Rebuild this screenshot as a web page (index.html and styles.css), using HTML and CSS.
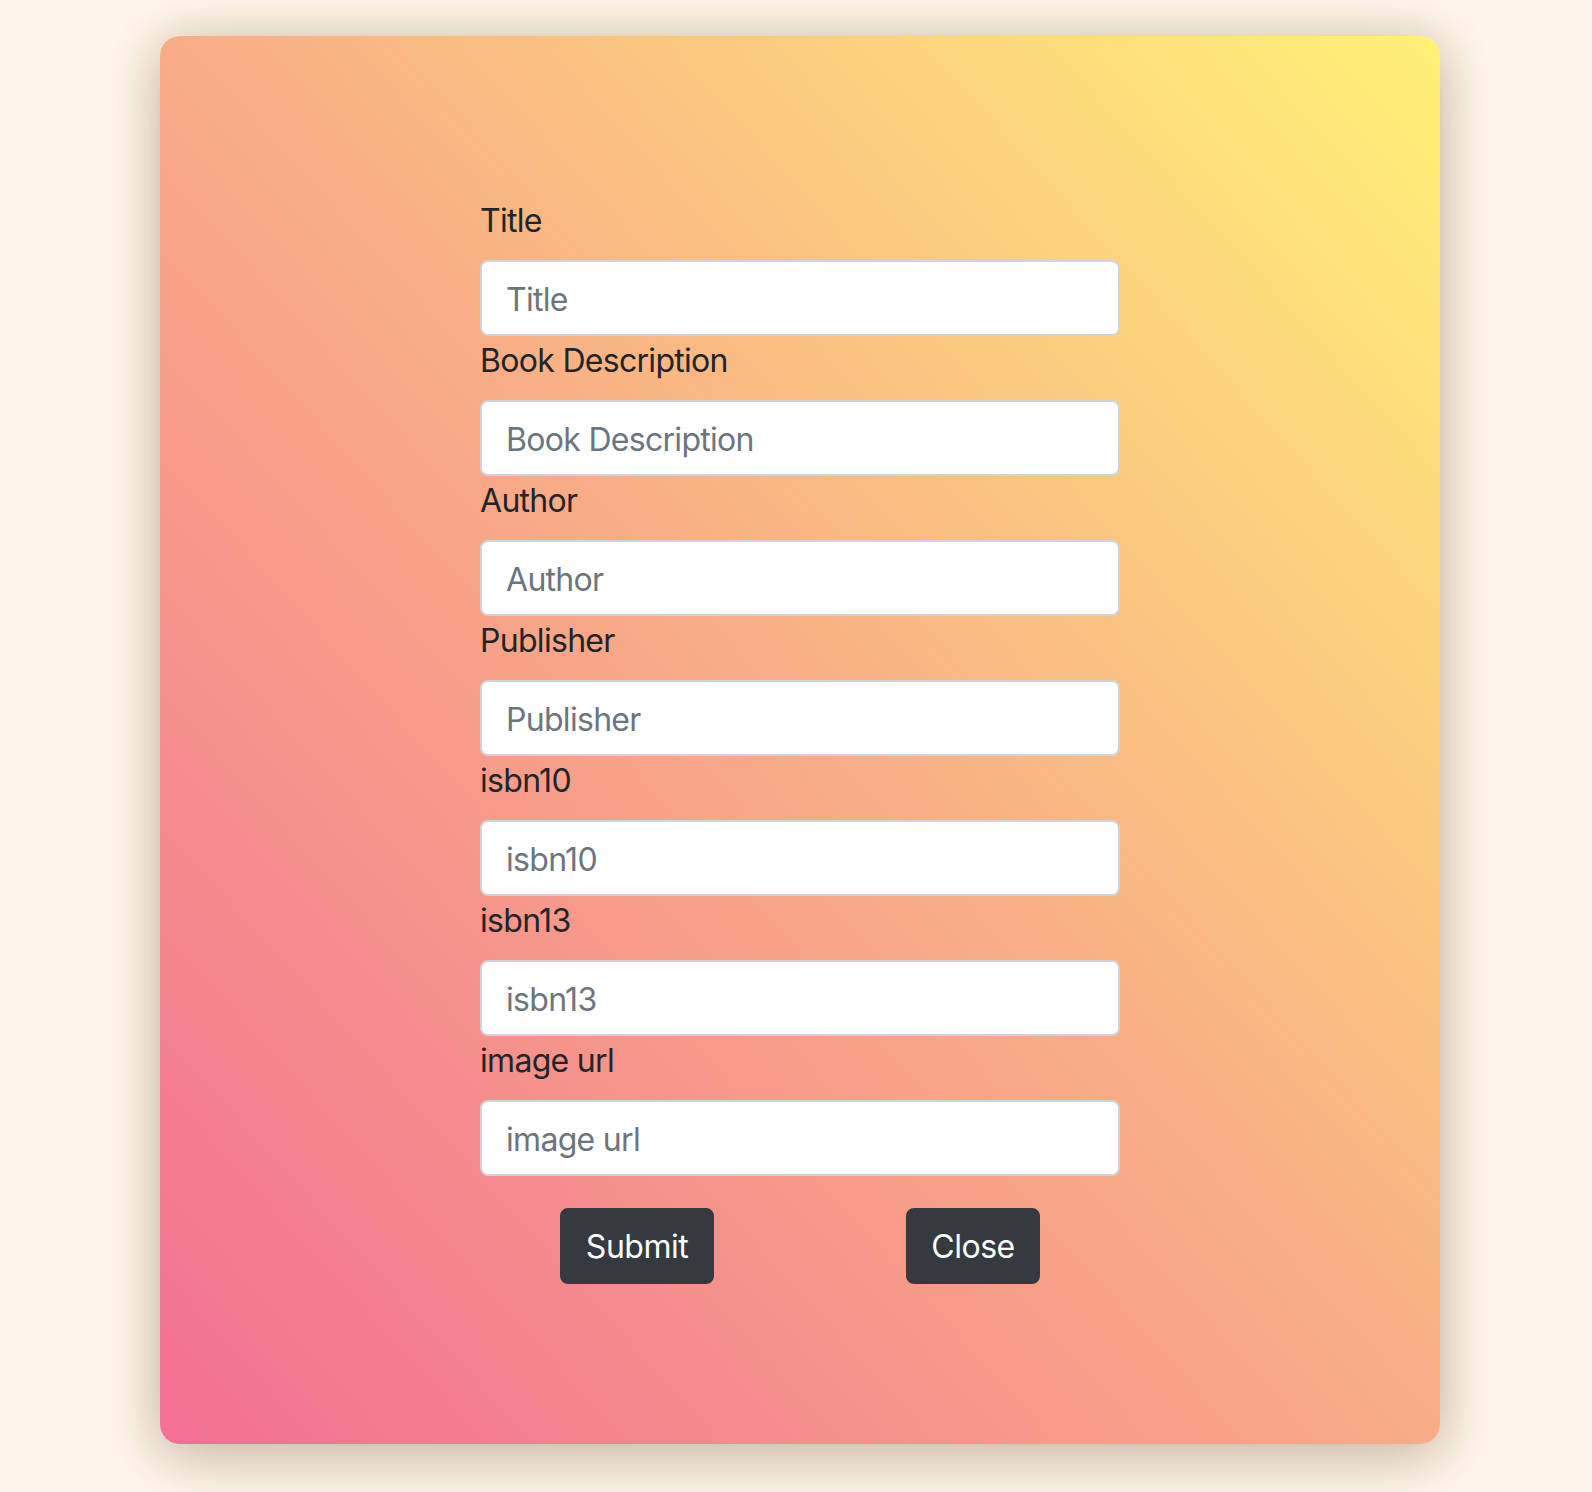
FILE: index.html
```html
<!DOCTYPE html>
<html lang="en">
<head>
<meta charset="utf-8">
<title>Add Book</title>
<link rel="stylesheet" href="styles.css">
</head>
<body>
<div class="card">
  <form class="book-form">
    <div class="field">
      <label class="field-label" for="title">Title</label>
      <input class="field-input" id="title" type="text" placeholder="Title">
    </div>
    <div class="field">
      <label class="field-label" for="desc">Book Description</label>
      <input class="field-input" id="desc" type="text" placeholder="Book Description">
    </div>
    <div class="field">
      <label class="field-label" for="author">Author</label>
      <input class="field-input" id="author" type="text" placeholder="Author">
    </div>
    <div class="field">
      <label class="field-label" for="publisher">Publisher</label>
      <input class="field-input" id="publisher" type="text" placeholder="Publisher">
    </div>
    <div class="field">
      <label class="field-label" for="isbn10">isbn10</label>
      <input class="field-input" id="isbn10" type="text" placeholder="isbn10">
    </div>
    <div class="field">
      <label class="field-label" for="isbn13">isbn13</label>
      <input class="field-input" id="isbn13" type="text" placeholder="isbn13">
    </div>
    <div class="field">
      <label class="field-label" for="imageurl">image url</label>
      <input class="field-input" id="imageurl" type="text" placeholder="image url">
    </div>
    <div class="actions">
      <button class="btn btn-submit" type="button">Submit</button>
      <button class="btn btn-close" type="button">Close</button>
    </div>
  </form>
</div>
</body>
</html>
```
FILE: styles.css
```css
html, body {
  margin: 0;
  padding: 0;
}

body {
  background: #fff5e9;
  font-family: Inter, "Noto Sans", "Liberation Sans", sans-serif;
  color: #212529;
  padding: 36px 0 48px 160px;
}

.card {
  width: 1280px;
  height: 1408px;
  box-sizing: border-box;
  border-radius: 20px;
  background: linear-gradient(to top right, #f26f93 0%, #f8ac86 50%, #fff176 100%);
  box-shadow: 0 0 50px rgba(70, 50, 20, 0.2), 0 20px 60px rgba(70, 50, 20, 0.18);
  padding: 160px 0;
}

.book-form {
  width: 640px;
  margin: 0 auto;
}

.field-label {
  display: block;
  font-size: 32px;
  line-height: 48px;
  padding-top: 1px;
  margin-bottom: 15px;
  letter-spacing: -0.7px;
}

.field-input {
  display: block;
  box-sizing: border-box;
  width: 640px;
  height: 76px;
  margin: 0;
  padding: 13px 24px 11px;
  border: 2px solid #ced4da;
  border-radius: 8px;
  background: #fff;
  font-family: inherit;
  font-size: 32px;
  line-height: 48px;
  color: #495057;
  letter-spacing: -0.7px;
  outline: none;
}

.field-input::placeholder {
  color: #6c757d;
  opacity: 1;
}

.actions {
  display: flex;
  justify-content: center;
  gap: 192px;
  margin-top: 32px;
}

.btn {
  box-sizing: border-box;
  height: 76px;
  padding: 2px 0 0;
  border: 2px solid #343a40;
  border-radius: 8px;
  background: #343a40;
  color: #fff;
  font-family: inherit;
  font-size: 32px;
  line-height: 48px;
  letter-spacing: -0.5px;
  cursor: pointer;
}

.btn-submit {
  width: 154px;
}

.btn-close {
  width: 134px;
}
```
